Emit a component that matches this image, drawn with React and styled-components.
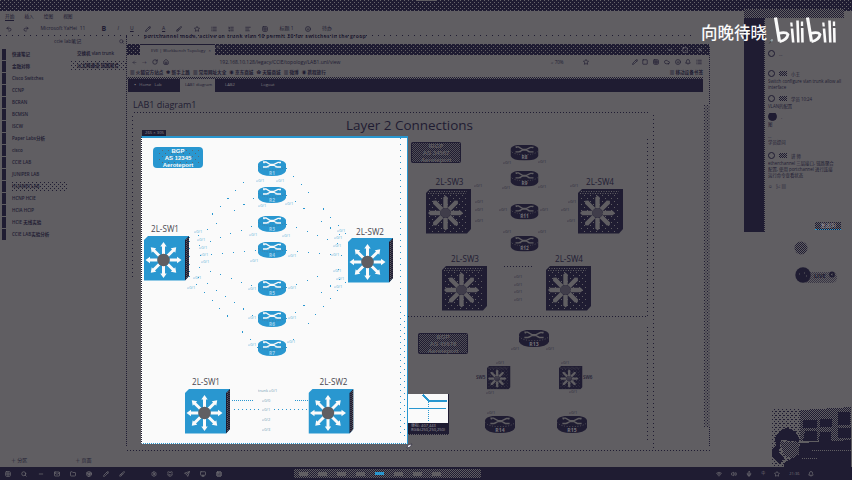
import React from "react";
import styled, { createGlobalStyle, css } from "styled-components";
import {
  Search, Folder, Mail, Chrome, Cloud, Settings, Pencil, Cat, Cpu, Send, Monitor, Bell,
  Undo2, Redo2, Brush, List, ListOrdered, Table, Smile, AlignLeft, RotateCw, House, Star,
  Minus, Square, X, Grid2x2, Wifi, Volume2, Mic, Plus, ArrowLeft,
} from "lucide-react";

const C = { gray: "#605e62", ink: "#1f1c32", blue: "#2997d0", white: "#fafafa" };

const Global = createGlobalStyle`
  * { box-sizing: border-box; }
  body { margin: 0; background: ${C.gray}; overflow: hidden; }
`;

const checker = (a, b) => css`
  background: repeating-conic-gradient(${a} 0 25%, ${b} 0 50%) 0 0 / 2px 2px;
`;
const speckle = (dot, base, s = 4) => css`
  background:
    radial-gradient(circle at 0.5px 0.5px, ${dot} 0.5px, transparent 0.6px) 0 0 / ${s}px ${s}px,
    radial-gradient(circle at 0.5px 0.5px, ${dot} 0.5px, transparent 0.6px) ${s / 2}px ${s / 2}px / ${s}px ${s}px,
    ${base};
`;
const dotsX = (s, c = C.ink) => css`
  background: repeating-linear-gradient(90deg, ${c} 0 1px, transparent 1px ${s}px);
`;
const dotsY = (s, c = C.ink) => css`
  background: repeating-linear-gradient(180deg, ${c} 0 1px, transparent 1px ${s}px);
`;

const Desktop = styled.main`
  position: relative;
  width: 852px;
  height: 480px;
  overflow: hidden;
  display: flex;
  flex-direction: column;
  background: ${C.gray};
  color: ${C.ink};
  font: 5px/1 "Open Sans", "Noto Sans CJK SC", sans-serif;
  svg { display: block; flex: none; }
`;
const TitleBar = styled.div`
  height: 11px;
  flex: none;
  ${speckle("#66646a", C.ink)}
  &::after {
    content: "";
    display: block;
    width: 20px;
    height: 1px;
    margin-left: 416px;
    background: ${C.gray};
  }
`;
const MenuRow = styled.div`
  display: flex;
  gap: 10px;
  height: 11px;
  padding: 2px 0 0 5px;
  font-size: 4.7px;
  line-height: 7px;
`;
const MenuTab = styled.span`
  height: 8px;
  border-bottom: ${(p) => (p.$on ? `1px solid ${C.ink}` : "0")};
`;
const ToolRow = styled.div`
  display: flex;
  align-items: center;
  height: 13px;
  padding-left: 6px;
  gap: 11.2px;
  font-size: 5px;
  white-space: nowrap;
  b { font-size: 7px; }
`;
const ToolFont = styled.span`
  width: 50px;
`;
const DotRule = styled.div`
  height: 1px;
  flex: none;
  width: 692px;
  ${dotsX(6)}
`;
const Sidebar = styled.aside`
  width: 127px;
  height: 410px;
  border-right: 1px dotted ${C.ink};
`;
const SideHead = styled.div`
  display: flex;
  justify-content: space-between;
  padding: 3px 2px 0 54px;
  height: 12px;
  font-size: 5px;
`;
const SideRow = styled.div`
  display: flex;
  align-items: center;
  height: 12px;
  padding-left: 2px;
  font-weight: 600;
  font-size: 4.5px;
`;
const Tab = styled.i`
  width: 4px;
  height: 11px;
  margin-right: 6px;
  background: ${C.ink};
`;
const Section = styled.span`
  width: ${(p) => (p.$page ? "59px" : "56px")};
  line-height: 9px;
  ${(p) => p.$on && speckle(C.ink, C.gray, 4)}
`;
const Page = styled.span`
  flex: 1;
  height: 10px;
  padding-left: 6px;
  line-height: 9px;
  ${(p) => p.$on && speckle(C.ink, C.gray, 4)}
`;
const StatusRow = styled.div`
  display: flex;
  gap: 48px;
  position: absolute;
  left: 11px;
  top: 458px;
`;

/* Browser window */
const Browser = styled.section`
  position: absolute;
  left: 127px;
  top: 44px;
  width: 584px;
  height: 407px;
  display: flex;
  flex-direction: column;
  &::after {
    content: "";
    height: 1px;
    margin-top: auto;
    ${dotsX(3)}
  }
`;
const TabStrip = styled.div`
  display: flex;
  height: 11px;
  flex: none;
  padding-left: 13px;
  width: 582px;
  color: ${C.gray};
  ${speckle("#605e62", C.ink)}
`;
const BrowserTab = styled.div`
  width: 75px;
  height: 11px;
  padding: 3px 4px 0 11px;
  border-top: 1px solid ${C.ink};
  background: ${C.gray};
  color: ${C.ink};
  font-size: 4.3px;
  white-space: nowrap;
  display: flex;
  justify-content: space-between;
`;
const WindowKeys = styled.div`
  display: flex;
  gap: 9px;
  margin: 3px 6px 0 auto;
  color: #8b898d;
`;
const AddressRow = styled.div`
  display: flex;
  align-items: center;
  height: 14px;
  flex: none;
  padding-left: 5px;
  gap: 5px;
  font-size: 4.5px;
`;
const Address = styled.span`
  margin-left: 46px;
  width: 326px;
  font-size: 5px;
`;
const Zoomed = styled.span`
  width: 27px;
`;
const Extensions = styled.div`
  display: flex;
  gap: 4.8px;
  margin-left: 38px;
`;
const Bookmarks = styled.div`
  display: flex;
  gap: 3px;
  height: 8px;
  flex: none;
  padding: 0 8px 0 3px;
  font-size: 4.6px;
  font-weight: 700;
  line-height: 7px;
  white-space: nowrap;
  span:last-child { margin-left: auto; }
`;
const Divider = styled.div`
  height: 2px;
  width: 576px;
  flex: none;
  ${checker(C.ink, C.gray)}
`;
const SiteNav = styled.nav`
  display: flex;
  height: 13px;
  width: 575px;
  flex: none;
  margin-left: 1px;
  background: ${C.ink};
  color: ${C.gray};
  font-size: 4.2px;
  line-height: 12px;
  white-space: nowrap;
`;
const NavItem = styled.span`
  flex: none;
  width: ${(p) => p.$w}px;
  padding-left: ${(p) => p.$pad || 5}px;
  background: ${(p) => (p.$on ? C.gray : "transparent")};
  color: ${(p) => (p.$on ? C.ink : "#7c7a7f")};
`;
const Heading = styled.h1`
  margin: 6px 0 0 6px;
  font: 400 9px/14px "Open Sans", sans-serif;
`;
const EdgeLine = styled.i`
  position: absolute;
  left: 582px;
  top: 3px;
  width: 1px;
  height: 400px;
  ${dotsY(2)}
`;
const ScrollTrack = styled.i`
  position: absolute;
  left: 577px;
  top: 61px;
  width: 6px;
  height: 322px;
  ${speckle(C.ink, C.gray, 3)}
`;

const Canvas = styled.svg`
  position: absolute;
  left: ${(p) => p.$x}px;
  top: ${(p) => p.$y}px;
  font-family: "Open Sans", sans-serif;
`;

/* Screenshot selection */
const Selection = styled.section`
  position: absolute;
  left: 141px;
  top: 136px;
  width: 267px;
  height: 308px;
  background: ${C.white};
  border: 1px solid ${C.blue};
  border-top-width: 2px;
  border-left: 1px dotted ${C.ink};
  border-bottom-style: dotted;
`;
const SizeTag = styled.div`
  position: absolute;
  left: 142px;
  top: 130px;
  width: 24px;
  height: 6px;
  padding-left: 3px;
  background: ${C.ink};
  color: #8f8d92;
  font-size: 4.2px;
  line-height: 6px;
  white-space: nowrap;
`;
const Loupe = styled.div`
  position: absolute;
  left: 408px;
  top: 394px;
  width: 41px;
  background: ${C.ink};
  color: #a3a1a6;
  font-size: 4px;
  line-height: 4.2px;
  white-space: nowrap;
  border-bottom: 1px dotted ${C.gray};
`;
const LoupeText = styled.div`
  padding: 1px 2px 1px 3px;
  height: 11px;
  overflow: hidden;
`;

/* Chat */
const Chat = styled.aside`
  position: absolute;
  left: 744px;
  top: 9px;
  width: 100px;
  height: 223px;
  display: grid;
  grid-template: 9px 1fr / 20px 1fr;
`;
const ChatTop = styled.div`
  grid-column: 1 / 3;
  ${checker(C.ink, C.gray)}
`;
const ChatRail = styled.div`
  background: ${C.ink};
`;
const ChatBody = styled.div`
  border-left: 1px dotted ${C.ink};
  display: flex;
  flex-direction: column;
  padding: 20px 0 0 3px;
`;
const Message = styled.div`
  height: ${(p) => p.$h}px;
  flex: none;
  overflow: hidden;
  font-size: 4.4px;
  line-height: 6px;
  white-space: nowrap;
`;
const Sender = styled.div`
  display: flex;
  align-items: center;
  gap: 4px;
  height: 7px;
  margin-bottom: 1px;
  &::before {
    content: "";
    width: ${(p) => (p.$big ? 7 : 5)}px;
    height: ${(p) => (p.$big ? 7 : 5)}px;
    border-radius: 50%;
    background: ${(p) => (p.$big ? C.ink : "transparent")};
    border: 1.5px solid ${C.ink};
  }
`;
const Avatar = styled.i`
  width: 8px;
  height: 5px;
  ${checker(C.ink, C.gray)}
`;
const SendButton = styled.div`
  position: absolute;
  left: 815px;
  top: 222px;
  width: 26px;
  height: 8px;
  color: #a09ea3;
  text-align: center;
  font-size: 5px;
  line-height: 6px;
  border-bottom: 1px dotted ${C.blue};
  ${speckle(C.gray, C.ink, 2)}
`;
const Watermark = styled.div`
  position: absolute;
  left: 701px;
  top: 16px;
  display: flex;
  gap: 7px;
  color: ${C.white};
  font: 500 16.5px/33px "Noto Sans CJK SC", sans-serif;
  white-space: nowrap;
`;

/* Taskbar */
const Taskbar = styled.footer`
  position: absolute;
  left: 0;
  right: 0;
  bottom: 0;
  height: 13px;
  display: flex;
  align-items: center;
  background: ${C.ink};
  color: #77757a;
  padding: 0 6px 0 5px;
`;
const TaskGroup = styled.div`
  display: flex;
  gap: 10.3px;
  margin-left: ${(p) => p.$ml || 0}px;
`;
const Running = styled.div`
  display: flex;
  align-items: center;
  gap: 10px;
  width: 187px;
  height: 9px;
  margin-left: 72px;
  padding-left: 5px;
  ${checker(C.gray, C.ink)}
`;
const RunningItem = styled.i`
  width: 9px;
  height: ${(p) => (p.$on ? 3 : 4)}px;
  background: ${(p) => (p.$on ? C.blue : C.gray)};
`;
const Tray = styled.div`
  display: flex;
  align-items: center;
  gap: 9px;
  margin-left: 235px;
  font-size: 4px;
  white-space: nowrap;
`;

function Router({ x, y, w = 28, h = 16, dark, name }) {
  const fill = dark ? C.ink : C.blue;
  const arrow = dark ? C.gray : C.white;
  return (
    <svg x={x} y={y} width={w} height={h} viewBox="0 0 28 16" preserveAspectRatio="none">
      <path d="M0 4Q1 1 7 0H21Q27 1 28 4V11Q26 16 14 16Q2 16 0 11Z" fill={fill} />
      <path d="M0 6Q3 10 14 10Q25 10 28 6" fill="none" stroke={dark ? C.gray : "#4b7592"} strokeWidth=".7" strokeDasharray="1 1.5" />
      <path d="M5 2H8L12 4.4H16L20 2.4H23M5 7H8.500L12 5.300H16L19 7H23M6 1.600V3.200M22 1.800V3.400M10 5.800V7.400M18 5.800V7.400" stroke={arrow} strokeWidth="1.3" fill="none" />
      <text x="14" y="14.7" fontSize="4.800" fontWeight="700" textAnchor="middle" fill={dark ? "#77757a" : "#9fd0ea"}>{name}</text>
    </svg>
  );
}

function Switch({ x, y, s = 45, dark }) {
  const fill = dark ? C.ink : C.blue;
  const arrow = dark ? C.gray : C.white;
  return (
    <svg x={x} y={y} width={s} height={s} viewBox="0 0 45 45">
      <path d="M0 4L4 0H45V40L41 44.5H0Z" fill={fill} />
      {dark ? (
        <>
          <path d="M3 2.5H41M2 4.5H40" stroke={C.gray} strokeWidth="1" strokeDasharray="1 1.5" />
          <rect x="2" y="5" width="38" height="38" fill="url(#sparse)" />
        </>
      ) : (
        <>
          <path d="M41 4L45 0V40L41 44.5Z" fill={C.ink} />
          <path d="M42.5 3V43M44 2V41" stroke={C.gray} strokeWidth="1" strokeDasharray="1 1" />
        </>
      )}
      <g transform="translate(19.5 24)">
        {[0, 45, 90, 135, 180, 225, 270, 315].map((a) => (
          <path
            key={a}
            transform={`rotate(${a})`}
            d={dark ? "M-2.2 -5V-15H-2.6L0 -17.500L2.600 -15H2.200V-5Z" : "M-1.500 -6V-13.500H-3.200L0 -18L3.200 -13.500H1.500V-6Z"}
            fill={arrow}
          />
        ))}
        <circle r={dark ? 5 : 6.2} fill={dark ? C.ink : C.gray} />
        {dark && <circle r="5" fill="url(#check)" />}
      </g>
    </svg>
  );
}

function Label({ x, y, w = 28, size = 9, children, color = C.ink }) {
  return (
    <text x={x} y={y} fontSize={size} textLength={w} lengthAdjust="spacingAndGlyphs" fill={color}>{children}</text>
  );
}

function AsBox({ x, y, dark, lines }) {
  return (
    <g fontFamily="Liberation Sans, sans-serif">
      <rect x={x} y={y} width="50" height="21" rx={dark ? 2 : 4} fill={dark ? C.ink : C.blue} />
      <rect x={x + (dark ? 1 : 4)} y={y + (dark ? 1 : 2)} width={dark ? 48 : 42} height={dark ? 19 : 16} fill={dark ? "url(#check)" : "url(#sparse)"} opacity={dark ? 0.75 : 0.8} />
      {lines.map((t, i) => (
        <text key={t} x={x + 25} y={y + 5.8 + i * 7} fontSize="6" fontWeight="700" textAnchor="middle" fill={dark ? C.gray : C.white}>{t}</text>
      ))}
    </g>
  );
}

function Patterns() {
  return (
    <defs>
      <pattern id="sparse" width="6" height="6" patternUnits="userSpaceOnUse">
        <path d="M0 0h1v1h-1zM3 3h1v1h-1z" fill={C.gray} />
      </pattern>
      <pattern id="check" width="2" height="2" patternUnits="userSpaceOnUse">
        <path d="M0 0h1v1h-1zM1 1h1v1h-1z" fill={C.gray} />
      </pattern>
      <pattern id="inkcheck" width="2" height="2" patternUnits="userSpaceOnUse">
        <path d="M0 0h1v1h-1zM1 1h1v1h-1z" fill={C.ink} />
      </pattern>
    </defs>
  );
}

function Ports({ items, color }) {
  return items.map(([x, y, t = "e0/1"], i) => (
    <text key={i} x={x} y={y} fontSize="4" fill={color} opacity=".75">{t}</text>
  ));
}

function DimDiagram() {
  return (
    <Canvas $x={127} $y={108} width="584" height="342" viewBox="127 108 584 342">
      <Patterns />
      <g stroke={C.ink} fill="none" shapeRendering="crispEdges" strokeDasharray="1 2">
        <path d="M134 112.500H650" />
        <path d="M653.500 115V448M132.500 116V280" strokeDasharray="1 3" />
        <path d="M647.500 139V317M647.500 327V440" strokeDasharray="1 3" />
        <path d="M408 316.500H646" />
      </g>
      <Label x={346} y={130.200} w={127} size={13.3}>Layer 2 Connections</Label>
      <AsBox x={411} y={142} dark lines={["IBGP", "AS 34567", "Aeroteport"]} />
      <AsBox x={418} y={333} dark lines={["BGP", "AS 45678", "Aeroteport"]} />
      {[[145, "R8"], [171, "R9"], [204, "R11"], [236, "R12"]].map(([y, n]) => (
        <Router key={n} x={510.500} y={y} dark name={n} h={15.500} />
      ))}
      {[[426, 189], [578, 189], [442, 266], [546, 266]].map(([x, y]) => <Switch key={x} x={x} y={y} dark />)}
      <Label x={435.500} y={185.300}>2L-SW3</Label>
      <Label x={586} y={185.300}>2L-SW4</Label>
      <Label x={451} y={262.300}>2L-SW3</Label>
      <Label x={555} y={262.300}>2L-SW4</Label>
      <Router x={519} y={330} w={30} h={17} dark name="R13" />
      <Router x={485} y={416} w={30} h={17} dark name="R14" />
      <Router x={557} y={416} w={30} h={17} dark name="R15" />
      <Switch x={487} y={366} s={23.500} dark />
      <Switch x={559} y={366} s={23.500} dark />
      <Ports color={C.ink} items={[
        [474, 187], [475, 203], [475, 211], [475, 222], [503, 164], [538, 163], [502, 189], [538, 188],
        [499, 211], [540, 211], [503, 233], [538, 233], [570, 187], [568, 203], [561, 211], [567, 222],
        [514, 278], [514, 286], [514, 293], [514, 301], [511, 350], [546, 350], [496, 364], [561, 364],
        [486, 394], [569, 393], [487, 414], [569, 414],
      ]} />
      <text x="476" y="379" fontSize="4.600" fontWeight="600" fill={C.ink}>SW5</text>
      <text x="583" y="379" fontSize="4.600" fontWeight="600" fill={C.ink}>SW6</text>
      <path d="M504 266.500H534" stroke={C.ink} strokeDasharray="1 2" />
    </Canvas>
  );
}

const ROUTER_Y = [160, 187, 216, 242, 280, 311, 340];

function SelectedDiagram() {
  return (
    <Selection>
      <Canvas $x={0} $y={0} width="265" height="305" viewBox="142 138 265 305">
        <g stroke={C.blue} fill="none" strokeDasharray="1 10" shapeRendering="crispEdges">
          {ROUTER_Y.map((y, i) => (
            <g key={y}>
              <path d={`M189 ${[238, 242, 249, 257, 264, 271, 276][i]}L258 ${y + 8}`} />
              <path d={`M286 ${y + 8}L348 ${[236, 241, 247, 256, 266, 273, 279][i]}`} />
            </g>
          ))}
          <path d="M232 400.500H254M295 400.500H308" strokeDasharray="1 1" />
          <path d="M234 409.500H262M274 409.500H308" strokeDasharray="1 3" />
          <path d="M400.500 138V438M404.500 315V441" strokeDasharray="1 5" />
        </g>
        <Ports color={C.blue} items={[
          [194, 233], [197, 241], [199, 249], [200, 256], [201, 263], [193, 279], [187, 289],
          [256, 182], [276, 182], [258, 207], [285, 205], [249, 236], [282, 237], [250, 262], [288, 257],
          [248, 290], [288, 289], [248, 319], [288, 319], [248, 346], [287, 343],
          [337, 232], [334, 239], [333, 247], [331, 256], [333, 272], [336, 280], [334, 288],
        ]} />
        <Ports color="#467c9b" items={[
          [258, 392, "trunk e0/1"], [262, 402, "e0/0"], [262, 411, "e0/1"], [262, 421, "e0/2"], [262, 431, "e0/3"],
        ]} />
        <AsBox x={153} y={147} lines={["BGP", "AS 12345", "Aeroteport"]} />
        {ROUTER_Y.map((y, i) => <Router key={y} x={258} y={y} name={`R${i + 1}`} />)}
        <Switch x={144} y={236} />
        <Switch x={348} y={238} />
        <Switch x={185} y={389} />
        <Switch x={308.500} y={389} />
        <Label x={151} y={231.500} color="#48464e">2L-SW1</Label>
        <Label x={356} y={235.300} color="#48464e">2L-SW2</Label>
        <Label x={192} y={385.300} color="#48464e">2L-SW1</Label>
        <Label x={319.500} y={385.300} color="#48464e">2L-SW2</Label>
      </Canvas>
    </Selection>
  );
}

function Bilibili() {
  return (
    <svg width="64" height="30" viewBox="0 0 64 30" fill="none" stroke={C.white} strokeWidth="3.2">
      {[0, 32].map((x) => (
        <g key={x} transform={`translate(${x} 0)`}>
          <path d="M1.500 1.500L5.500 25.500" />
          <path d="M4.500 17.500Q12 15.500 14 18.500Q13 24 5.500 25.700" strokeWidth="2.800" />
          <path d="M18 12.500L19.200 26.500M23.500 4.500L24.300 26.500M28.200 12L28.500 26.500" strokeWidth="2.600" />
          <path d="M17.300 6.500L17.700 10.500M28 5.500V10" strokeWidth="2.300" />
        </g>
      ))}
    </svg>
  );
}

function Webcam() {
  return (
    <Canvas $x={772} $y={407} width="80" height="60" viewBox="0 0 80 60" shapeRendering="crispEdges">
      <rect y="2" width="28" height="58" fill="url(#sparse-ink)" />
      <defs>
        <pattern id="sparse-ink" width="4" height="4" patternUnits="userSpaceOnUse">
          <path d="M0 0h1v1h-1zM2 2h1v1h-1zM3 0h1v1h-1z" fill={C.ink} />
        </pattern>
      </defs>
      <path d="M28 3L79 0V34H28Z" fill="url(#inkcheck)" />
      <path d="M31 13H45V21H31ZM48 12H60V20H48ZM66 5H78V18H66ZM33 24H45V34H31ZM48 25H59V35H47ZM66 21H79V31H66Z" fill={C.ink} />
      <path d="M28 36L79 33V60H24Z" fill={C.ink} />
      <path d="M40 43.500H79M30 51.500H45" stroke={C.gray} strokeDasharray="1 1" />
      <path d="M0 42L4 38L3 31Q8 21 16 21Q24 23 27 31V35L20 34L9 33L7 45L12 51L8 57L0 50Z" fill={C.ink} />
      <path d="M8 35H27V48L20 52L12 48Z" fill={C.gray} />
      <path d="M8 35H27V48L20 52L12 48Z" fill="url(#inkcheck)" />
      <path d="M12 56L28 47L32 60H12Z" fill={C.ink} />
    </Canvas>
  );
}

const SECTIONS = [
  ["快速笔记", "交换机 vlan trunk"], ["金融对称", "以太网通道 链路聚合", "page"], ["Cisco Switches"], ["CCNP"],
  ["BCRAN"], ["BCMSN"], ["ISCW"], ["Paper Labs分析"], ["cisco"], ["CCIE LAB"],
  ["JUNIPER LAB"], ["HUAWEI LAB", null, "section"], ["HCNP HCIE"], ["HCIA HCIP"], ["HCIE 无线实验"], ["CCIE LAB实验分析"],
];
const BOOKMARKS = ["▦ 火狐官方站点", "✱ 新手上路", "▦ 常用网址大全", "◉ 京东商城", "✿ 天猫商城", "▦ 微博", "◉ 携程旅行", "▦ 移动设备书签"];
const sz = { size: 6, strokeWidth: 2.6 };

export default function App() {
  return (
    <Desktop>
      <Global />
      <TitleBar />
      <MenuRow><MenuTab $on>开始</MenuTab><MenuTab>插入</MenuTab><MenuTab>绘图</MenuTab><MenuTab>视图</MenuTab></MenuRow>
      <ToolRow>
        <Undo2 {...sz} /><Redo2 {...sz} /><ToolFont>Microsoft YaHei&nbsp; 11</ToolFont>
        <b>B</b><i>I</i><u>U</u><Pencil {...sz} /><u>A</u><Brush {...sz} /><Star {...sz} />
        <List {...sz} /><ListOrdered {...sz} /><AlignLeft {...sz} /><Grid2x2 {...sz} /><span>标题 1</span>
        <Smile {...sz} /><span>待办</span>
      </ToolRow>
      <DotRule />
      <Sidebar>
        <SideHead><span>ccie lab笔记</span><Search size={5} strokeWidth={2.5} /></SideHead>
        {SECTIONS.map(([name, page, on]) => (
          <SideRow key={name}>
            <Tab />
            <Section $page={page} $on={on === "section"}>{name}</Section>
            {page && <Page $on={on === "page"}>{page}</Page>}
          </SideRow>
        ))}
      </Sidebar>
      <StatusRow><span>＋ 分区</span><span>＋ 页面</span></StatusRow>

      <Canvas $x={140} $y={34} width="230" height="8">
        <text x="4" y="4" fontSize="5" fontWeight="700" fill={C.ink} textLength="222">portchannel mode, active on trunk vlan 10 permit 20 for switches in the group</text>
      </Canvas>

      <Browser>
        <TabStrip>
          <BrowserTab><span>EVE | Workbench Topology</span><span>×</span></BrowserTab>
          <Plus size={6} />
          <WindowKeys><Minus size={6} /><Square size={6} /><X size={6} /></WindowKeys>
        </TabStrip>
        <AddressRow>
          <ArrowLeft size={5} /><span>→</span><RotateCw {...sz} /><House {...sz} />
          <Address>192.168.10.128/legacy/CCIE/topology/LAB1.unl/view</Address>
          <Zoomed>⌕ 70%</Zoomed><Star {...sz} />
          <Extensions>{[Pencil, Square, Table, Cloud, Smile, Bell, List].map((I, i) => <I key={i} {...sz} />)}</Extensions>
        </AddressRow>
        <Bookmarks>{BOOKMARKS.map((b) => <span key={b}>{b}</span>)}</Bookmarks>
        <Divider />
        <SiteNav>
          <NavItem $w={52}>▪ &nbsp;Home &nbsp; Lab</NavItem>
          <NavItem $w={35} $on>LAB1 diagram</NavItem>
          <NavItem $w={35} $pad={10}>LAB2</NavItem>
          <NavItem $w={40} $pad={11}>Logout</NavItem>
        </SiteNav>
        <Heading>LAB1 diagram1</Heading>
        <EdgeLine />
        <ScrollTrack />
      </Browser>
      <DimDiagram />

      <Chat>
        <ChatTop />
        <ChatRail />
        <ChatBody>
          <Message $h={12}>🎤</Message>
          <Message $h={20}><Sender>...</Sender></Message>
          <Message $h={25}><Sender><Avatar />小王</Sender>Switch configure vlan trunk allow all<br />interface</Message>
          <Message $h={18}><Sender><Avatar />学员 10:24</Sender>VLAN的配置</Message>
          <Message $h={39}><Sender $big>.</Sender>图<br /><br />...<br />学员提问</Message>
          <Message $h={31}><Sender><Avatar />讲 师</Sender>etherchannel 三层接口, 链路聚合<br />配置, 使用 portchannel 进行连接<br />运行命令查看状态</Message>
          <Message $h={10}>☺ &nbsp; ✂ ▤</Message>
        </ChatBody>
      </Chat>
      <SendButton>发送(S)</SendButton>
      <Canvas $x={790} $y={236} width="52" height="52" viewBox="790 236 52 52">
        <circle cx="801" cy="248" r="6.500" fill="url(#inkcheck)" />
        <rect x="803" y="272" width="34" height="11" rx="5" fill="url(#inkcheck)" opacity=".6" />
        <circle cx="803" cy="275" r="7.700" fill={C.ink} />
        <text x="814" y="278" fontSize="5.500" fontWeight="700" fill={C.ink}>LIVE</text>
        <circle cx="832" cy="274.500" r="2" fill="none" stroke={C.ink} strokeWidth="1.800" />
        <path d="M799 274h1M804 273h1M806 276h1" stroke={C.gray} />
      </Canvas>
      <Webcam />

      <SizeTag>265 × 305</SizeTag>
      <SelectedDiagram />
      <Loupe>
        <svg width="40" height="29" shapeRendering="crispEdges">
          <rect width="40" height="29" fill={C.white} />
          <path d="M15 1L21 7H39" stroke={C.blue} strokeWidth="2" fill="none" />
          <path d="M1 14.500H38" stroke={C.blue} />
          <path d="M20.500 8V27" stroke={C.blue} strokeDasharray="1 1" />
        </svg>
        <LoupeText>坐标: 407,443<br />RGB:(250,250,250)</LoupeText>
      </Loupe>
      <Canvas $x={403} $y={443} width="12" height="8" viewBox="0 0 12 8">
        <path d="M4 5L5 2L9 1L7 4Z" fill={C.white} stroke={C.ink} strokeWidth=".6" />
      </Canvas>
      <Watermark><span>向晚待晓</span><Bilibili /></Watermark>

      <Taskbar>
        <TaskGroup>{[Grid2x2, Search, Minus, Mail, Folder, Chrome, Pencil, Brush].map((I, i) => <I key={i} {...sz} />)}</TaskGroup>
        <TaskGroup $ml={26}>{[Settings, Cat, Send, Monitor, Cpu].map((I, i) => <I key={i} {...sz} />)}</TaskGroup>
        <Running>{[0, 1, 2, 3, 4, 5, 6, 7].map((i) => <RunningItem key={i} $on={i === 4} />)}</Running>
        <Tray><Wifi {...sz} /><Volume2 {...sz} /><Mic {...sz} /><span>中</span><Star {...sz} /><span>21:36</span><Bell {...sz} /></Tray>
      </Taskbar>
    </Desktop>
  );
}
